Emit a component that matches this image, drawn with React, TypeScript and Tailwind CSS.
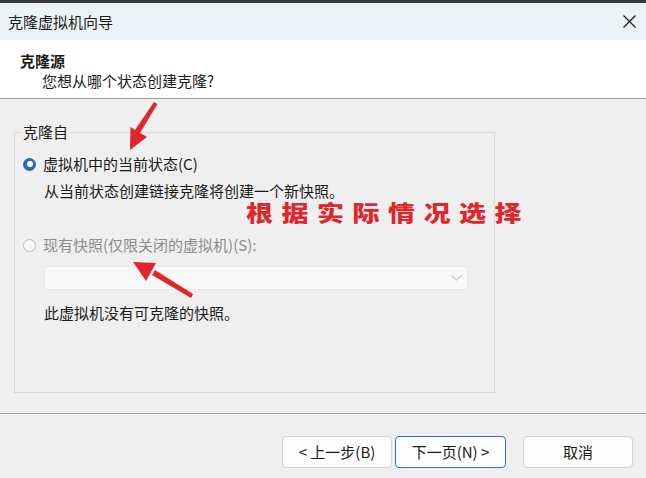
import React from 'react';

const font = { fontFamily: '"Noto Sans CJK SC", "Noto Sans", sans-serif' };

function Arrows() {
  // hand-drawn red annotation arrows
  return (
    <svg className="absolute left-0 top-0 pointer-events-none" width="646" height="478">
      <polygon points="154,102 157.5,104 140,133 135,130" fill="#e0262b" />
      <polygon points="130,150 130.5,127 147,137" fill="#e0262b" />
      <polygon points="193,294 191,298 152,275 155,270" fill="#e0262b" />
      <polygon points="133,262 156,263 146,281" fill="#e0262b" />
    </svg>
  );
}

function Button({ label, primary }: { label: string; primary?: boolean }) {
  return (
    <button
      className={
        primary
          ? 'h-[32px] w-[111px] rounded-[4px] border border-[#2f6fc7] bg-[#fdfdfd] text-[15px] text-[#1a1a1a]'
          : 'h-[32px] w-[110px] rounded-[4px] border border-[#d2d2d2] bg-[#fdfdfd] text-[15px] text-[#1a1a1a]'
      }
    >
      {label}
    </button>
  );
}

export default function App() {
  return (
    <div
      className="relative w-[646px] h-[478px] bg-[#efefef] flex flex-col overflow-hidden text-[#1a1a1a]"
      style={font}
    >
      {/* window top edge */}
      <div className="h-[3px] bg-[#3a3a3a]" />
      {/* title bar */}
      <div className="h-[37px] bg-[#eaf2f5] flex items-center justify-between pl-[8px] pr-[10px]">
        <span className="text-[15px] leading-[20px]">克隆虚拟机向导</span>
        <svg width="13" height="13" viewBox="0 0 13 13">
          <path d="M0.5 0.5 L12.5 12.5 M12.5 0.5 L0.5 12.5" stroke="#1a1a1a" strokeWidth="1.2" />
        </svg>
      </div>
      {/* header */}
      <div className="h-[59px] bg-white pl-[20px] pt-[11px] border-b border-[#a0a0a0]">
        <div className="text-[15px] leading-[20px] font-bold">克隆源</div>
        <div className="text-[15px] leading-[20px] pl-[22px]">您想从哪个状态创建克隆?</div>
      </div>
      {/* body */}
      <fieldset className="mt-[23px] ml-[14px] w-[481px] h-[271px] border border-[#d9d9d9] px-0">
        <legend className="ml-[6px] px-[2px] text-[15px] leading-[20px]">克隆自</legend>
        <div className="mt-[12px] pl-[8px] flex items-center gap-[7px] h-[20px]">
          <span className="w-[13px] h-[13px] rounded-full bg-[#2a66c0] flex items-center justify-center">
            <span className="w-[6px] h-[6px] rounded-full bg-white" />
          </span>
          <span className="text-[15px] leading-[20px]">虚拟机中的当前状态(C)</span>
        </div>
        <div className="mt-[7px] pl-[29px] text-[15px] leading-[20px]">
          从当前状态创建链接克隆将创建一个新快照。
        </div>
        <div className="mt-[34px] pl-[8px] flex items-center gap-[7px] h-[20px]">
          <span className="w-[13px] h-[13px] rounded-full border border-[#bdbdbd] bg-[#f7f7f7]" />
          <span className="text-[15px] leading-[20px] text-[#8c8c8c]">现有快照(仅限关闭的虚拟机)(S):</span>
        </div>
        <div className="mt-[11px] ml-[29px] w-[424px] h-[24px] bg-[#f8f8f8] border border-[#e6e6e6] rounded-[2px] flex items-center justify-end pr-[5px]">
          <svg width="11" height="6" viewBox="0 0 11 6">
            <path d="M0.5 0.5 L5.5 5 L10.5 0.5" stroke="#b0b0b0" fill="none" strokeWidth="1" />
          </svg>
        </div>
        <div className="mt-[13px] pl-[29px] text-[15px] leading-[20px]">此虚拟机没有可克隆的快照。</div>
      </fieldset>
      {/* footer */}
      <div className="mt-[20px] h-[2px] border-t border-[#a0a0a0] bg-white" />
      <div className="mt-[21px] flex justify-end pr-[13px]">
        <Button label="< 上一步(B)" />
        <div className="ml-[3px]">
          <Button label="下一页(N) >" primary />
        </div>
        <div className="ml-[17px]">
          <Button label="取消" />
        </div>
      </div>
      {/* annotation */}
      <div className="absolute left-[246px] top-[196px] text-[27px] leading-[32px] font-black tracking-[8.5px] text-[#e0262b] scale-y-[0.78] origin-center">
        根据实际情况选择
      </div>
      <Arrows />
    </div>
  );
}
